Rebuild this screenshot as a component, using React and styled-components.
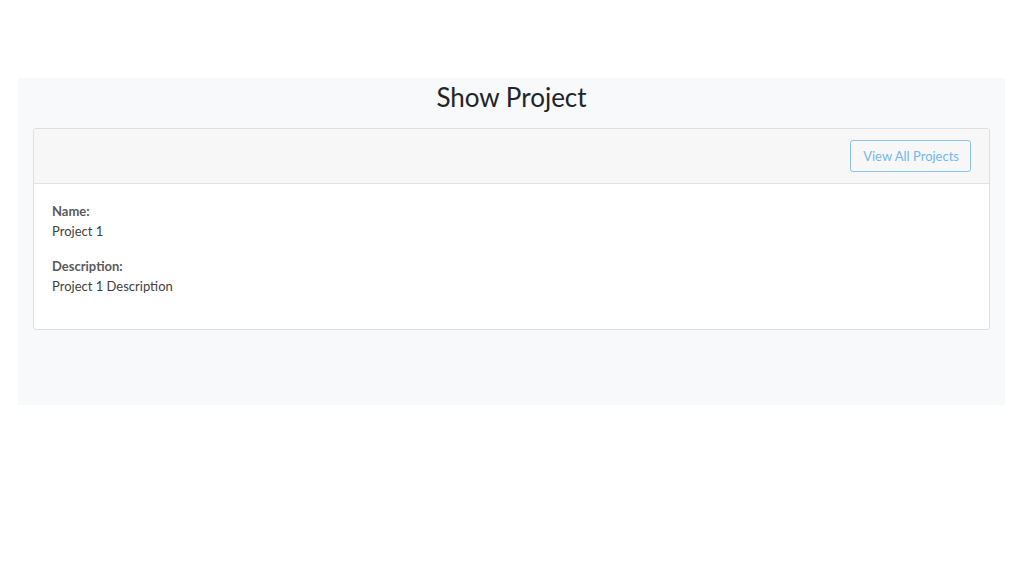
import React from "react";
import styled, { createGlobalStyle } from "styled-components";

const Global = createGlobalStyle`
  html, body { margin: 0; padding: 0; background: #ffffff; }
  body { font-family: "Lato", "Noto Sans", sans-serif; color: #212529; }
  * { box-sizing: border-box; }
`;

const Page = styled.div`
  width: 1024px;
  height: 578px;
  padding: 78px 19px 0 18px;
`;

const Panel = styled.div`
  background: #f8f9fb;
  height: 327px;
  padding: 0 15px;
  display: flex;
  flex-direction: column;
`;

const Title = styled.h1`
  margin: 0;
  height: 50px;
  display: flex;
  align-items: center;
  justify-content: center;
  font-size: 26px;
  font-weight: 400;
  color: #212529;
  padding-bottom: 12px;
`;

const Card = styled.div`
  background: #ffffff;
  border: 1px solid #dfdfdf;
  border-radius: 3px;
  display: flex;
  flex-direction: column;
`;

const CardHeader = styled.div`
  background: #f7f7f7;
  border-bottom: 1px solid #e2e2e2;
  height: 55px;
  display: flex;
  align-items: center;
  justify-content: flex-end;
  padding: 0 18px;
  border-radius: 3px 3px 0 0;
`;

const OutlineButton = styled.button`
  font-family: inherit;
  font-size: 13px;
  color: #74b7ec;
  background: transparent;
  border: 1px solid #8cc4ef;
  border-radius: 3px;
  height: 32px;
  padding: 0 11px 0 12px;
  cursor: pointer;
`;

const CardBody = styled.div`
  padding: 17px 18px 30px;
  height: 145px;
`;

const Field = styled.div`
  margin-bottom: 15px;
  font-size: 13px;
  line-height: 20px;
`;

const Label = styled.div`
  font-weight: 700;
  color: #5a5a5a;
`;

const Value = styled.div`
  color: #3f3f3f;
`;

export default function App() {
  return (
    <>
      <Global />
      <Page>
        <Panel>
          <Title>Show Project</Title>
          <Card>
            <CardHeader>
              <OutlineButton>View All Projects</OutlineButton>
            </CardHeader>
            <CardBody>
              <Field>
                <Label>Name:</Label>
                <Value>Project 1</Value>
              </Field>
              <Field>
                <Label>Description:</Label>
                <Value>Project 1 Description</Value>
              </Field>
            </CardBody>
          </Card>
        </Panel>
      </Page>
    </>
  );
}
